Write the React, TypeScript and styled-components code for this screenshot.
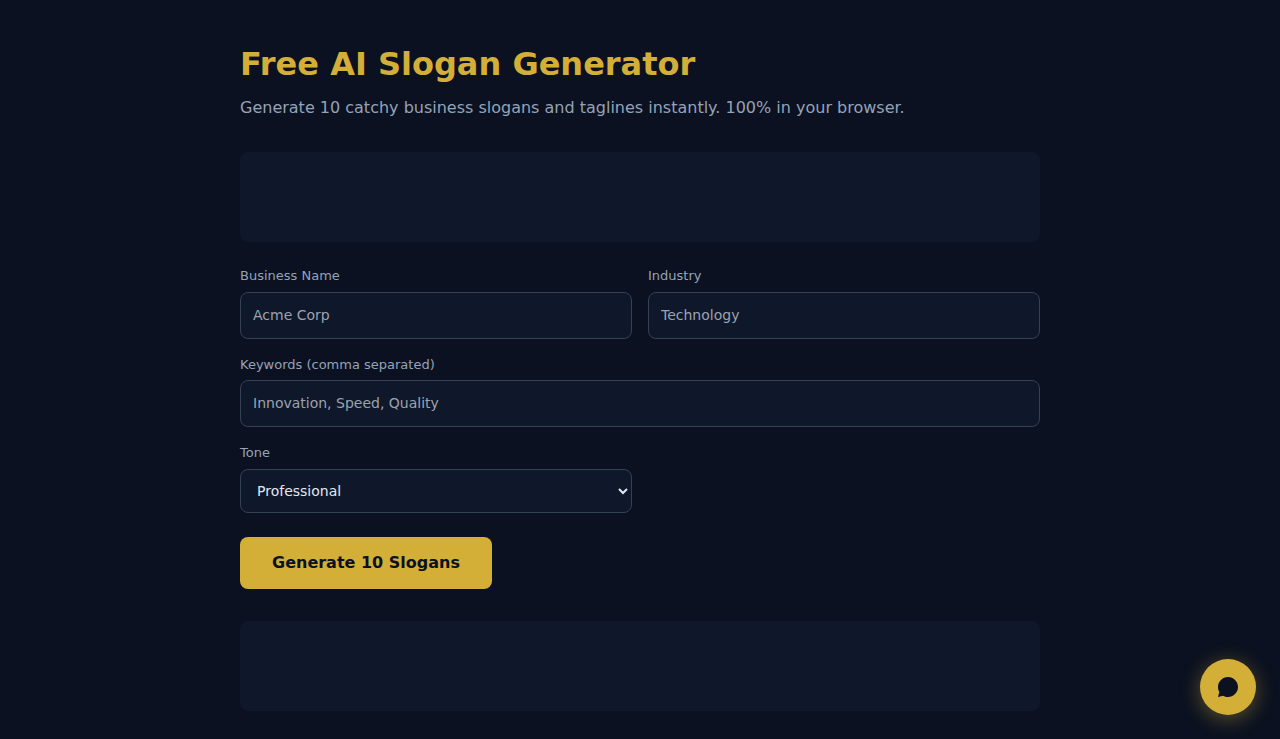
import React from "react";
import styled, { createGlobalStyle } from "styled-components";

const GlobalStyle = createGlobalStyle`
  *, *::before, *::after { margin: 0; padding: 0; box-sizing: border-box; }
  body {
    background: #0b1120;
    color: #e2e8f0;
    font-family: "DejaVu Sans", sans-serif;
    line-height: 1.5;
    overflow: hidden;
  }
`;

const Page = styled.main`
  width: 800px;
  height: 739px;
  margin: 0 auto;
  padding-top: 40px;
`;

const Title = styled.h1`
  color: #d4af37;
  font-size: 32px;
  font-weight: 700;
  margin-bottom: 8px;
`;

const Subtitle = styled.p`
  color: #94a3b8;
  font-size: 16px;
  margin-bottom: 32px;
`;

const AdSlot = styled.div`
  height: 90px;
  border-radius: 8px;
  background: #0f172a;
`;

const Form = styled.form`
  display: grid;
  grid-template-columns: 1fr 1fr;
  gap: 16px;
  padding: 24px 0;
`;

const Field = styled.div<{ $wide?: boolean }>`
  display: flex;
  flex-direction: column;
  grid-column: ${(p) => (p.$wide ? "1 / -1" : "auto")};
`;

const Label = styled.label`
  color: #94a3b8;
  font-size: 13px;
  margin-bottom: 6px;
`;

const Input = styled.input`
  width: 100%;
  height: 47px;
  padding: 11.75px 12px 12.25px;
  border: 1px solid #334155;
  border-radius: 8px;
  background: #0f172a;
  color: #e2e8f0;
  font: 14px/1.5 "DejaVu Sans", sans-serif;
  &::placeholder { color: #9ca3af; }
`;

const Select = styled.select`
  width: 100%;
  height: 44px;
  padding: 12px;
  border: 1px solid #334155;
  border-radius: 8px;
  background: #0f172a;
  color: #e2e8f0;
  font: 14px "DejaVu Sans", sans-serif;
`;

const GenerateButton = styled.button`
  display: block;
  padding: 14px 32px;
  margin-bottom: 32px;
  border: 0;
  border-radius: 8px;
  background: #d4af37;
  color: #0b1120;
  font: 700 16px/1.5 "DejaVu Sans", sans-serif;
  cursor: pointer;
`;

const ChatButton = styled.button`
  position: fixed;
  right: 24px;
  bottom: 24px;
  width: 56px;
  height: 56px;
  display: flex;
  align-items: center;
  justify-content: center;
  border: 0;
  border-radius: 50%;
  background: #d4af37;
  color: #0b1120;
  box-shadow: 0 4px 20px rgba(212, 175, 55, 0.4);
  cursor: pointer;
`;

export default function App() {
  return (
    <>
      <GlobalStyle />
      <Page>
        <Title>Free AI Slogan Generator</Title>
        <Subtitle>Generate 10 catchy business slogans and taglines instantly. 100% in your browser.</Subtitle>
        <AdSlot />
        <Form>
          <Field>
            <Label htmlFor="business">Business Name</Label>
            <Input id="business" placeholder="Acme Corp" />
          </Field>
          <Field>
            <Label htmlFor="industry">Industry</Label>
            <Input id="industry" placeholder="Technology" />
          </Field>
          <Field $wide>
            <Label htmlFor="keywords">Keywords (comma separated)</Label>
            <Input id="keywords" placeholder="Innovation, Speed, Quality" />
          </Field>
          <Field>
            <Label htmlFor="tone">Tone</Label>
            <Select id="tone">
              <option>Professional</option>
              <option>Playful</option>
              <option>Bold</option>
            </Select>
          </Field>
        </Form>
        <GenerateButton type="button">Generate 10 Slogans</GenerateButton>
        <AdSlot />
      </Page>
      <ChatButton aria-label="Open chat">
        <svg width="24" height="24" viewBox="0 0 24 24" fill="currentColor">
          <path d="M12 2C6.48 2 2 6.48 2 12c0 1.82.49 3.53 1.34 5L2 22l5-1.34C8.47 21.51 10.18 22 12 22c5.52 0 10-4.48 10-10S17.52 2 12 2z" />
        </svg>
      </ChatButton>
    </>
  );
}
